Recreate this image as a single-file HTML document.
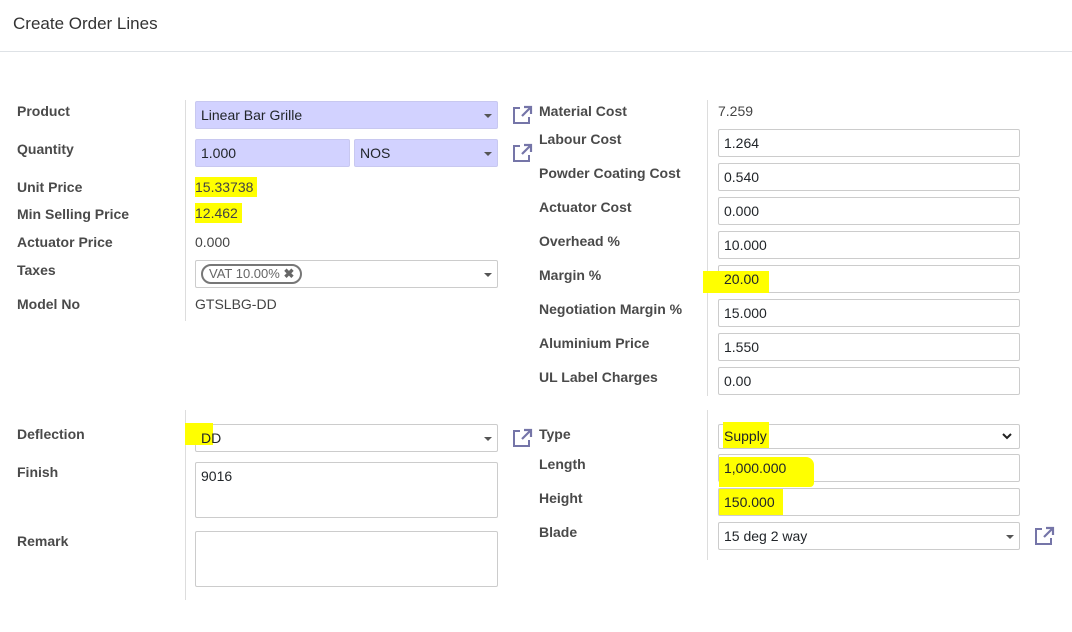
<!DOCTYPE html>
<html><head><style>
*{box-sizing:border-box;margin:0;padding:0}
body{width:1072px;height:632px;background:#fff;font-family:"Liberation Sans",sans-serif;font-size:14px;color:#212529;position:relative;overflow:hidden}
.a{position:absolute}
.h{left:13px;top:14px;font-size:17px;color:#333}
.hl{left:0;top:51px;width:1072px;border-top:1px solid #dee2e6}
.l{position:absolute;font-weight:bold;color:#4a4a4a;font-size:14px}
.in{position:absolute;border:1px solid #ccc;border-radius:2px;height:28px;padding:6px 5px;font-size:14px;color:#212529;line-height:15px;background:#fff}
.req{background:#d2d2ff;border-color:#c8c8f0}
.t{position:absolute;color:#444}
.vl{position:absolute;border-left:1px solid #ddd}
.car{position:absolute;right:5px;top:12px;border-left:4px solid transparent;border-right:4px solid transparent;border-top:4px solid #555}
.y{background:#ffff00}
svg.ic{position:absolute;width:22px;height:22px}
</style></head><body>
<div class="a h">Create Order Lines</div>
<div class="a hl"></div>

<div class="vl" style="left:185px;top:100px;height:221px"></div>
<div class="vl" style="left:707px;top:100px;height:296px"></div>
<div class="vl" style="left:185px;top:410px;height:190px"></div>
<div class="vl" style="left:707px;top:410px;height:150px"></div>

<div class="l" style="left:17px;top:103px">Product</div>
<div class="l" style="left:17px;top:141px">Quantity</div>
<div class="l" style="left:17px;top:179px">Unit Price</div>
<div class="l" style="left:17px;top:206px">Min Selling Price</div>
<div class="l" style="left:17px;top:234px">Actuator Price</div>
<div class="l" style="left:17px;top:262px">Taxes</div>
<div class="l" style="left:17px;top:296px">Model No</div>

<div class="in req" style="left:195px;top:101px;width:303px">Linear Bar Grille<span class="car"></span></div>
<div class="in req" style="left:195px;top:139px;width:155px">1.000</div>
<div class="in req" style="left:354px;top:139px;width:144px">NOS<span class="car"></span></div>
<div class="t" style="left:195px;top:177px;padding:2px 2px 2px 0;line-height:16px"><span class="y" style="padding:2px 4px 2px 0">15.33738</span></div>
<div class="t" style="left:195px;top:205px;line-height:16px"><span class="y" style="padding:2px 4px 2px 0">12.462</span></div>
<div class="t" style="left:195px;top:234px">0.000</div>
<div class="in" style="left:195px;top:260px;width:303px;padding:3px 5px"><span style="display:inline-block;border:2px solid #777;border-radius:10px;padding:1px 6px;font-size:13px;color:#666;line-height:14px">VAT 10.00% <b>✖</b></span><span class="car"></span></div>
<div class="t" style="left:195px;top:296px">GTSLBG-DD</div>

<svg class="ic" style="left:511px;top:104px" viewBox="0 0 22 22"><path d="M9 4H3v15h15v-6" fill="none" stroke="#7575a8" stroke-width="2"/><path d="M11 12L19 4M13 3h7v7" fill="none" stroke="#7575a8" stroke-width="2.2"/></svg>
<svg class="ic" style="left:511px;top:142px" viewBox="0 0 22 22"><path d="M9 4H3v15h15v-6" fill="none" stroke="#7575a8" stroke-width="2"/><path d="M11 12L19 4M13 3h7v7" fill="none" stroke="#7575a8" stroke-width="2.2"/></svg>

<div class="l" style="left:539px;top:103px">Material Cost</div>
<div class="l" style="left:539px;top:131px">Labour Cost</div>
<div class="l" style="left:539px;top:165px">Powder Coating Cost</div>
<div class="l" style="left:539px;top:199px">Actuator Cost</div>
<div class="l" style="left:539px;top:233px">Overhead %</div>
<div class="l" style="left:539px;top:267px">Margin %</div>
<div class="l" style="left:539px;top:301px">Negotiation Margin %</div>
<div class="l" style="left:539px;top:335px">Aluminium Price</div>
<div class="l" style="left:539px;top:369px">UL Label Charges</div>

<div class="t" style="left:718px;top:103px">7.259</div>
<div class="in" style="left:718px;top:129px;width:302px">1.264</div>
<div class="in" style="left:718px;top:163px;width:302px">0.540</div>
<div class="in" style="left:718px;top:197px;width:302px">0.000</div>
<div class="in" style="left:718px;top:231px;width:302px">10.000</div>
<div class="in" style="left:718px;top:265px;width:302px"><span class="a y" style="left:-16px;top:5px;width:66px;height:22px"></span><span style="position:relative">20.00</span></div>
<div class="in" style="left:718px;top:299px;width:302px">15.000</div>
<div class="in" style="left:718px;top:333px;width:302px">1.550</div>
<div class="in" style="left:718px;top:367px;width:302px">0.00</div>

<div class="l" style="left:17px;top:426px">Deflection</div>
<div class="l" style="left:17px;top:464px">Finish</div>
<div class="l" style="left:17px;top:533px">Remark</div>
<div class="in" style="left:195px;top:424px;width:303px"><span class="a y" style="left:-11px;top:-2px;width:28px;height:22px"></span><span style="position:relative">DD</span><span class="car"></span></div>
<div class="in" style="left:195px;top:462px;width:303px;height:56px">9016</div>
<div class="in" style="left:195px;top:531px;width:303px;height:56px"></div>
<svg class="ic" style="left:511px;top:427px" viewBox="0 0 22 22"><path d="M9 4H3v15h15v-6" fill="none" stroke="#7575a8" stroke-width="2"/><path d="M11 12L19 4M13 3h7v7" fill="none" stroke="#7575a8" stroke-width="2.2"/></svg>

<div class="l" style="left:539px;top:426px">Type</div>
<div class="l" style="left:539px;top:456px">Length</div>
<div class="l" style="left:539px;top:490px">Height</div>
<div class="l" style="left:539px;top:524px">Blade</div>
<div class="in" style="left:718px;top:424px;width:302px;height:25px;padding:4px 5px"><span class="a y" style="left:4px;top:-3px;width:46px;height:26px"></span><span style="position:relative">Supply</span><svg style="position:absolute;right:7px;top:8px" width="10" height="7" viewBox="0 0 10 7"><path d="M1 1l4 4 4-4" fill="none" stroke="#222" stroke-width="2"/></svg></div>
<div class="in" style="left:718px;top:454px;width:302px"><span class="a y" style="left:0px;top:2px;width:95px;height:30px;border-radius:0 8px 4px 0"></span><span style="position:relative">1,000.000</span></div>
<div class="in" style="left:718px;top:488px;width:302px"><span class="a y" style="left:0px;top:0px;width:64px;height:26px"></span><span style="position:relative">150.000</span></div>
<div class="in" style="left:718px;top:522px;width:302px">15 deg 2 way<span class="car"></span></div>
<svg class="ic" style="left:1033px;top:525px" viewBox="0 0 22 22"><path d="M9 4H3v15h15v-6" fill="none" stroke="#7575a8" stroke-width="2"/><path d="M11 12L19 4M13 3h7v7" fill="none" stroke="#7575a8" stroke-width="2.2"/></svg>
</body></html>
